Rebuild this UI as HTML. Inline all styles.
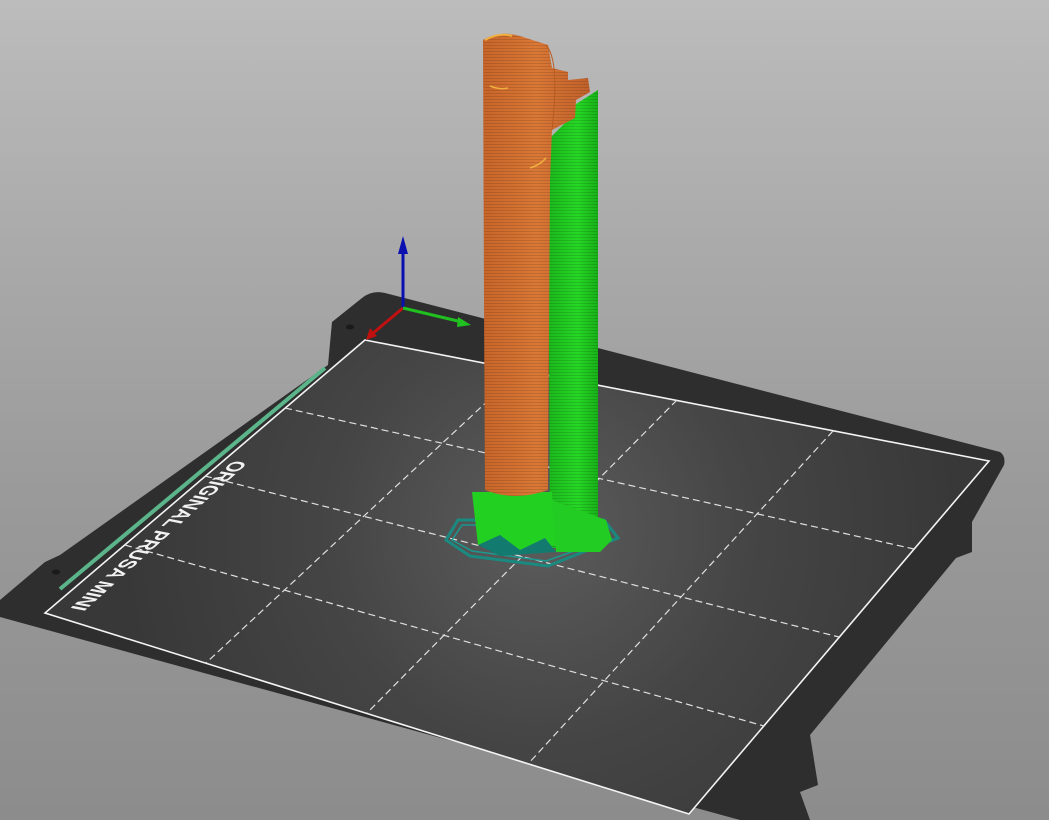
<!DOCTYPE html>
<html><head><meta charset="utf-8"><style>
html,body{margin:0;padding:0;width:1049px;height:820px;overflow:hidden}
body{background:linear-gradient(#bcbcbc 0%,#aaaaaa 30%,#9a9a9a 60%,#8c8c8c 100%)}
svg{position:absolute;left:0;top:0}
</style></head><body>
<svg width="1049" height="820" viewBox="0 0 1049 820" xmlns="http://www.w3.org/2000/svg">
<defs>
<radialGradient id="bed" cx="540" cy="530" r="420" gradientUnits="userSpaceOnUse">
<stop offset="0" stop-color="#5c5c5c"/><stop offset="0.5" stop-color="#454545"/><stop offset="1" stop-color="#383838"/>
</radialGradient>
<linearGradient id="or" x1="0" x2="1"><stop offset="0" stop-color="#c8652a"/><stop offset="0.5" stop-color="#da7836"/><stop offset="1" stop-color="#c0602a"/></linearGradient>
<linearGradient id="gr" x1="0" x2="1"><stop offset="0" stop-color="#1cb81c"/><stop offset="0.6" stop-color="#26d826"/><stop offset="1" stop-color="#18b018"/></linearGradient>
<pattern id="st" width="4" height="3" patternUnits="userSpaceOnUse"><rect width="4" height="1" fill="rgba(0,0,0,0.12)"/></pattern>
</defs>
<path d="M362,298 Q372,290 385,293 L1000,452 Q1006,456 1004,465 L972,522 L972,552 L956,558 L810,735 L818,785 L800,792 L810,820 L740,820 L0,617 L0,600 L45,562 L60,555 L328,365 L332,322 Z" fill="#2e2e2e"/>
<path d="M365,340 L989,461 L689,814 L45,613 Z" fill="url(#bed)"/>
<path d="M365,340 L989,461 L689,814 L45,613 Z" fill="none" stroke="#f4f4f4" stroke-width="1.6"/>
<g stroke="#e0e0e0" stroke-width="1.2" stroke-dasharray="7,4" fill="none">
<line x1="521" y1="370" x2="206" y2="663"/>
<line x1="677" y1="400" x2="367" y2="713"/>
<line x1="833" y1="431" x2="528" y2="764"/>
<line x1="285" y1="408" x2="914" y2="549"/>
<line x1="205" y1="476" x2="839" y2="637"/>
<line x1="125" y1="545" x2="764" y2="726"/>
</g>
<ellipse cx="350" cy="327" rx="4" ry="2.5" fill="#1a1a1a"/>
<ellipse cx="56" cy="572" rx="4" ry="2.5" fill="#1a1a1a"/>
<line x1="325" y1="368" x2="60" y2="589" stroke="#5bb48a" stroke-width="4"/>
<text x="0" y="0" transform="matrix(-0.74,0.67,-0.98,-0.19,234,460)" fill="#f2f2f2" font-family="Liberation Sans, sans-serif" font-weight="bold" font-size="21" textLength="222" lengthAdjust="spacingAndGlyphs">ORIGINAL PRUSA MINI</text>
<line x1="403" y1="308" x2="403" y2="250" stroke="#0a10b0" stroke-width="3"/>
<path d="M403,236 L398,254 L408,254 Z" fill="#0a10b0"/>
<line x1="403" y1="308" x2="372" y2="334" stroke="#c01010" stroke-width="3"/>
<path d="M366,340 L370,328 L377,336 Z" fill="#c01010"/>
<line x1="403" y1="308" x2="462" y2="322" stroke="#20c020" stroke-width="3"/>
<path d="M471,325 L458,317 L457,327 Z" fill="#20c020"/>
<path d="M446,540 L458,520 L604,520 L618,538 L548,566 L470,556 Z" fill="none" stroke="#1a8a80" stroke-width="3"/>
<path d="M452,540 L462,525 L600,525 L611,538 L546,561 L472,551 Z" fill="none" stroke="#1a9a90" stroke-width="1.5"/>
<path d="M548,140 L570,118 L576,104 L598,90 L598,548 L550,548 Z" fill="url(#gr)"/>
<path d="M548,140 L570,118 L576,104 L598,90 L598,548 L550,548 Z" fill="url(#st)"/>
<path d="M472,492 L552,492 L556,545 L530,552 L505,548 L478,545 Z" fill="#22d022"/>
<path d="M552,500 L606,520 L612,540 L600,552 L556,552 Z" fill="#22cc22"/>
<path d="M478,545 L500,535 L520,550 L545,538 L556,552 L500,556 Z" fill="#137a70"/>
<path d="M483,40 Q500,30 520,36 L548,45 L552,68 L568,72 L568,80 L588,78 L590,92 L576,100 L575,118 L552,130 L550,180 L548,490 Q515,502 485,490 L484,300 Z" fill="url(#or)"/>
<path d="M483,40 Q500,30 520,36 L548,45 L552,68 L568,72 L568,80 L588,78 L590,92 L576,100 L575,118 L552,130 L550,180 L548,490 Q515,502 485,490 L484,300 Z" fill="url(#st)"/>
<path d="M485,40 Q500,32 512,36" stroke="#f0b040" stroke-width="2" fill="none"/>
<path d="M490,86 Q500,90 508,88" stroke="#f0b040" stroke-width="1.5" fill="none"/>
<path d="M530,168 Q540,165 546,158" stroke="#f0b040" stroke-width="1.5" fill="none"/>
<path d="M546,45 Q560,60 552,130" stroke="#b85a22" stroke-width="1" fill="none"/>
</svg>
</body></html>
